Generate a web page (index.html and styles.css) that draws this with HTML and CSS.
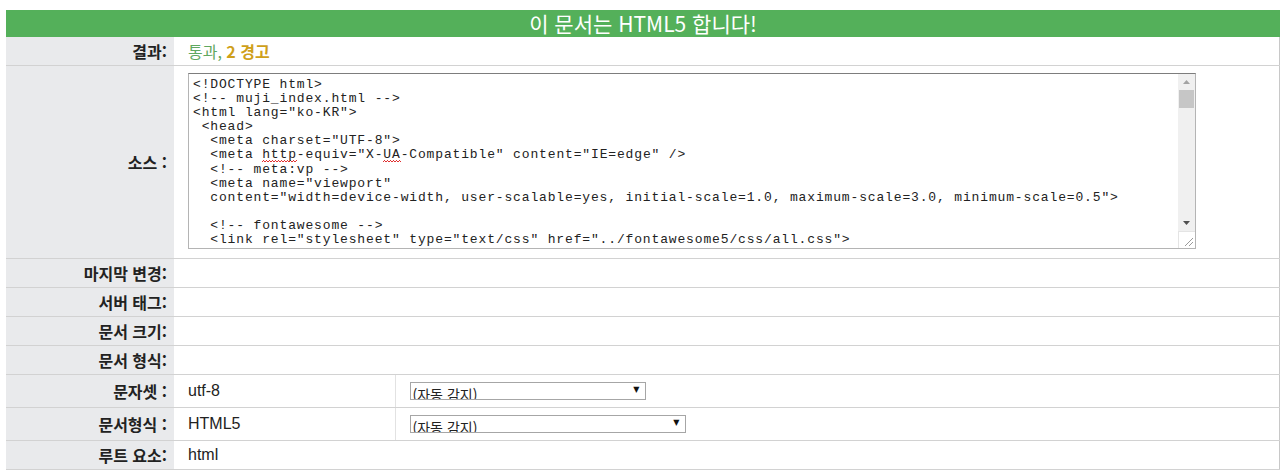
FILE: index.html
```html
<!DOCTYPE html>
<html lang="ko">
<head>
<meta charset="utf-8">
<link rel="stylesheet" href="styles.css">
</head>
<body>
<div class="page">
  <div class="banner">이 문서는 HTML5 합니다!</div>
  <table class="info">
    <colgroup><col class="c-label"><col class="c-val"><col class="c-sel"></colgroup>
    <tr class="row">
      <th>결과:</th>
      <td colspan="2"><span class="pass">통과,</span> <span class="warn">2 경고</span></td>
    </tr>
    <tr class="row src-row">
      <th>소스 :</th>
      <td colspan="2" class="src-cell">
        <div class="textarea">
<pre class="code">&lt;!DOCTYPE html&gt;
&lt;!-- muji_index.html --&gt;
&lt;html lang="ko-KR"&gt;
 &lt;head&gt;
  &lt;meta charset="UTF-8"&gt;
  &lt;meta <span class="spell">http</span>-equiv="X-<span class="spell">UA</span>-Compatible" content="IE=edge" /&gt;
  &lt;!-- meta:vp --&gt;
  &lt;meta name="viewport"
  content="width=device-width, user-scalable=yes, initial-scale=1.0, maximum-scale=3.0, minimum-scale=0.5"&gt;

  &lt;!-- fontawesome --&gt;
  &lt;link rel="stylesheet" type="text/css" href="../fontawesome5/css/all.css"&gt;</pre>
          <div class="scrollbar">
            <div class="sb-btn"><svg width="7" height="4" viewBox="0 0 7 4"><path d="M3.5 0 L7 4 L0 4 Z" fill="#a3a3a3"/></svg></div>
            <div class="sb-track"><div class="sb-thumb"></div></div>
            <div class="sb-btn"><svg width="7" height="4" viewBox="0 0 7 4"><path d="M0 0 L7 0 L3.5 4 Z" fill="#505050"/></svg></div>
            <div class="sb-grip"><svg width="16" height="16" viewBox="0 0 16 16"><path d="M14 6 L6 14 M14 10 L10 14" stroke="#9a9a9a" stroke-width="1"/></svg></div>
          </div>
        </div>
      </td>
    </tr>
    <tr class="row"><th>마지막 변경:</th><td colspan="2"></td></tr>
    <tr class="row"><th>서버 태그:</th><td colspan="2"></td></tr>
    <tr class="row"><th>문서 크기:</th><td colspan="2"></td></tr>
    <tr class="row"><th>문서 형식:</th><td colspan="2"></td></tr>
    <tr class="row sel-row">
      <th>문자셋 :</th>
      <td class="val split">utf-8</td>
      <td class="sel-cell"><div class="select w1"><span class="sel-text">(자동 감지)</span><span class="arrow">▼</span></div></td>
    </tr>
    <tr class="row sel-row">
      <th>문서형식 :</th>
      <td class="val split">HTML5</td>
      <td class="sel-cell"><div class="select w2"><span class="sel-text">(자동 감지)</span><span class="arrow">▼</span></div></td>
    </tr>
    <tr class="row"><th>루트 요소:</th><td colspan="2" class="val">html</td></tr>
  </table>
</div>
</body>
</html>
```
FILE: styles.css
```css
html, body {
  margin: 0;
  padding: 0;
  background: #ffffff;
}
body {
  padding: 10px 3px 0 6px;
  font-family: "Liberation Sans", "Noto Sans CJK KR", sans-serif;
  color: #222;
}
.page {
  width: 1274px;
}
.banner {
  height: 27px;
  line-height: 27px;
  background: #54b05a;
  color: #ffffff;
  text-align: center;
  font-family: "Noto Sans CJK KR", sans-serif;
  font-size: 21px;
}
.info {
  width: 1274px;
  border-collapse: collapse;
  table-layout: fixed;
  border-right: 1px solid #c8c8c8;
}
.c-label { width: 168px; }
.c-val { width: 221px; }
.row th,
.row td {
  border-bottom: 1px solid #d2d2d2;
  height: 28px;
  padding: 0;
  vertical-align: middle;
}
.row th {
  background: #e9eaec;
  text-align: right;
  padding-right: 7px;
  font-family: "Noto Sans CJK KR", sans-serif;
  font-weight: 700;
  font-size: 16px;
  color: #222;
  white-space: nowrap;
}
.row td {
  padding-left: 14px;
  font-size: 16px;
}
.pass {
  color: #5fa85f;
  font-family: "Noto Sans CJK KR", sans-serif;
  font-size: 16px;
}
.warn {
  color: #cfa01a;
  font-family: "Noto Sans CJK KR", sans-serif;
  font-size: 16px;
  font-weight: 700;
}
.src-row th,
.src-row td.src-cell {
  height: 176px;
}
.src-row td.src-cell {
  padding: 7px 0 9px 14px;
  vertical-align: top;
}
.textarea {
  width: 1006px;
  height: 174px;
  border: 1px solid #b4b4b4;
  border-top-color: #7d7d7d;
  display: flex;
  background: #fff;
  overflow: hidden;
}
.code {
  flex: 1;
  margin: 0;
  padding: 4px 0 0 4px;
  font-family: "Liberation Mono", monospace;
  font-size: 13px;
  letter-spacing: 0.85px;
  line-height: 14.1px;
  color: #222;
  overflow: hidden;
  white-space: pre;
}
.spell {
  background-image: radial-gradient(circle at 50% 100%, transparent 1px, #e03030 1px, #e03030 1.6px, transparent 1.6px);
  background-size: 3px 2px;
  background-repeat: repeat-x;
  background-position: 0 100%;
}
.scrollbar {
  width: 17px;
  display: flex;
  flex-direction: column;
  background: #f0f0f0;
}
.sb-btn {
  height: 16px;
  display: flex;
  align-items: center;
  justify-content: center;
}
.sb-track {
  flex: 1;
  padding: 0 1px;
}
.sb-thumb {
  height: 18px;
  background: #c6c6c6;
}
.sb-grip {
  height: 16px;
  background: #ffffff;
  border-top: 1px solid #e4e4e4;
  border-left: 1px solid #e4e4e4;
}
.sel-row th,
.sel-row td {
  height: 32px;
}
.split {
  border-right: 1px solid #e2e2e2;
}
.sel-row td.sel-cell {
  padding-left: 14px;
}
.select {
  position: relative;
  height: 16px;
  border: 1px solid #a6a6a6;
  background: #fff;
  overflow: hidden;
  font-family: "Noto Sans CJK KR", sans-serif;
  font-size: 14px;
  color: #222;
}
.select.w1 { width: 234px; }
.select.w2 { width: 274px; }
.sel-text {
  position: absolute;
  left: 2px;
  top: 0;
  line-height: 22px;
}
.arrow {
  position: absolute;
  right: 5px;
  top: 0;
  font-family: "DejaVu Sans", sans-serif;
  font-size: 8px;
  line-height: 14px;
  color: #111;
}
```
